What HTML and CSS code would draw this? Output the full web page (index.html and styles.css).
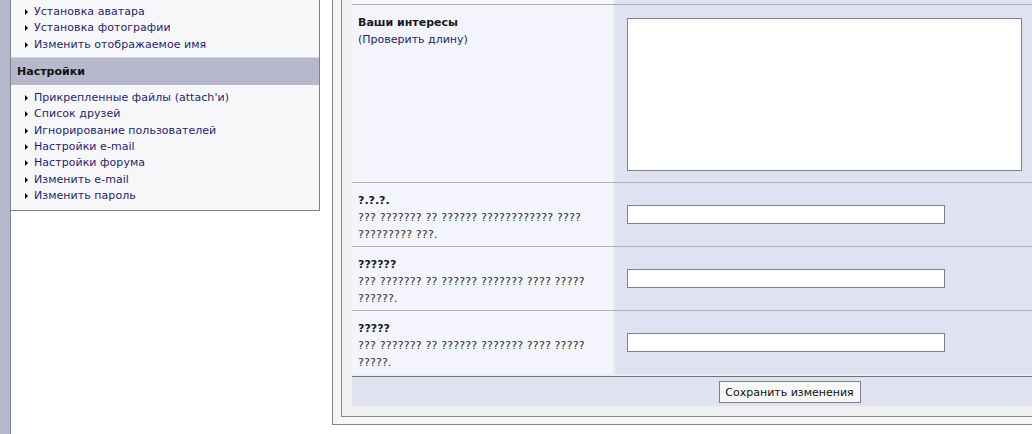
FILE: index.html
```html
<!DOCTYPE html>
<html lang="ru">
<head>
<meta charset="utf-8">
<title>Профиль</title>
<link rel="stylesheet" href="styles.css">
</head>
<body>
<div class="page">
  <div class="strip"></div>
  <div class="sidebar">
    <ul class="menu menu-top">
      <li><a href="#">Установка аватара</a></li>
      <li><a href="#">Установка фотографии</a></li>
      <li><a href="#">Изменить отображаемое имя</a></li>
    </ul>
    <div class="menu-head">Настройки</div>
    <ul class="menu menu-bottom">
      <li><a href="#">Прикрепленные файлы (attach'и)</a></li>
      <li><a href="#">Список друзей</a></li>
      <li><a href="#">Игнорирование пользователей</a></li>
      <li><a href="#">Настройки e-mail</a></li>
      <li><a href="#">Настройки форума</a></li>
      <li><a href="#">Изменить e-mail</a></li>
      <li><a href="#">Изменить пароль</a></li>
    </ul>
  </div>
  <div class="main">
    <div class="outer">
      <div class="inner">
        <div class="table">
          <div class="row stub">
            <div class="lcell"></div>
            <div class="vcell"></div>
          </div>
          <div class="row">
            <div class="lcell">
              <b class="title">Ваши интересы</b><br>
              <a href="#">(Проверить длину)</a>
            </div>
            <div class="vcell vcell-area"><textarea class="area"></textarea></div>
          </div>
          <div class="row">
            <div class="lcell">
              <b class="title">?.?.?.</b><br>
              <span class="desc">??? ??????? ?? ?????? ???????????? ???? ????????? ???.</span>
            </div>
            <div class="vcell"><input class="field" type="text"></div>
          </div>
          <div class="row">
            <div class="lcell">
              <b class="title">??????</b><br>
              <span class="desc">??? ??????? ?? ?????? ??????? ???? ????? ??????.</span>
            </div>
            <div class="vcell"><input class="field" type="text"></div>
          </div>
          <div class="row">
            <div class="lcell">
              <b class="title">?????</b><br>
              <span class="desc">??? ??????? ?? ?????? ??????? ???? ????? ?????.</span>
            </div>
            <div class="vcell"><input class="field" type="text"></div>
          </div>
          <div class="footer">
            <button class="btn" type="button">Сохранить изменения</button>
          </div>
        </div>
      </div>
    </div>
  </div>
</div>
</body>
</html>
```
FILE: styles.css
```css
html, body {
  margin: 0;
  padding: 0;
  background: #ffffff;
  overflow: hidden;
}
body {
  font-family: "DejaVu Sans", Verdana, sans-serif;
  font-size: 11px;
  color: #1a1a1a;
}
a {
  color: #1f1f6e;
  text-decoration: none;
}
.page {
  display: flex;
  align-items: flex-start;
  height: 434px;
  width: 1300px;
}
.strip {
  width: 10px;
  align-self: stretch;
  background: #b4b8ca;
  border-right: 1px solid #7e828f;
  flex: none;
}
.sidebar {
  width: 308px;
  flex: none;
  background: #f7f7fa;
  border-right: 1px solid #7e828f;
  border-bottom: 1px solid #7e828f;
}
.menu {
  list-style: none;
  margin: 0;
  padding: 0;
}
.menu-top {
  padding: 4px 0 4px;
}
.menu-bottom {
  padding: 5px 0 6px;
}
.menu li {
  line-height: 16.33px;
  height: 16.33px;
  padding-left: 14px;
  white-space: nowrap;
  letter-spacing: 0.05px;
}
.menu li::before {
  content: "";
  display: inline-block;
  width: 0;
  height: 0;
  border-left: 3px solid #000;
  border-top: 3px solid transparent;
  border-bottom: 3px solid transparent;
  margin-right: 6px;
  vertical-align: 0px;
}
.menu-head {
  height: 27px;
  line-height: 28px;
  border-top: 1px solid #d3d5df;
  background: #b6b9cb;
  padding-left: 6px;
  font-weight: bold;
  color: #111;
}
.main {
  margin-left: 12px;
  flex: none;
}
.outer {
  border-left: 1px solid #868891;
  border-bottom: 1px solid #868891;
  background: #f6f6f7;
  padding: 0 8px 7px 8px;
}
.inner {
  border-left: 1px solid #868891;
  border-bottom: 1px solid #868891;
  background: #f0f0f2;
  padding: 0 10px 10px 10px;
}
.table {
  width: 875px;
  background: #ececf2;
}
.row {
  display: grid;
  grid-template-columns: 261px 1fr;
  column-gap: 2px;
  border-top: 1px solid #aeb0b9;
}
.row.stub {
  border-top: none;
  height: 4px;
}
.row.stub .lcell {
  background: #f8f8fc;
  padding: 0;
}
.row.stub .vcell {
  padding: 0;
}
.lcell {
  background: #f3f4fc;
  padding: 9px 6px 3px 6px;
  line-height: 17px;
}
.title {
  color: #1a1a1a;
}
.desc {
  color: #2e2e2e;
  letter-spacing: 0.18px;
}
.vcell {
  background: #dfe2f0;
  padding: 0 12px;
  display: flex;
  align-items: center;
}
.vcell-area {
  padding: 13px 12px 11px;
}
.area {
  display: block;
  box-sizing: border-box;
  width: 395px;
  height: 153px;
  margin: 0;
  border: 1px solid #7d8290;
  background: #fff;
  resize: none;
}
.field {
  display: block;
  box-sizing: border-box;
  width: 318px;
  height: 19px;
  margin: 0;
  padding: 0 2px;
  border: 1px solid #7d8290;
  background: #fff;
}
.footer {
  margin-top: 2px;
  border-top: 1px solid #6f7380;
  background: #dfe2ef;
  padding: 4px 0 3px;
  display: flex;
  justify-content: center;
}
.btn {
  box-sizing: border-box;
  width: 142px;
  height: 22px;
  margin: 0;
  padding: 0;
  border: 1px solid #7b7f8e;
  background: #f7f7f8;
  font-family: "DejaVu Sans", Verdana, sans-serif;
  font-size: 11px;
  color: #111;
}
```
